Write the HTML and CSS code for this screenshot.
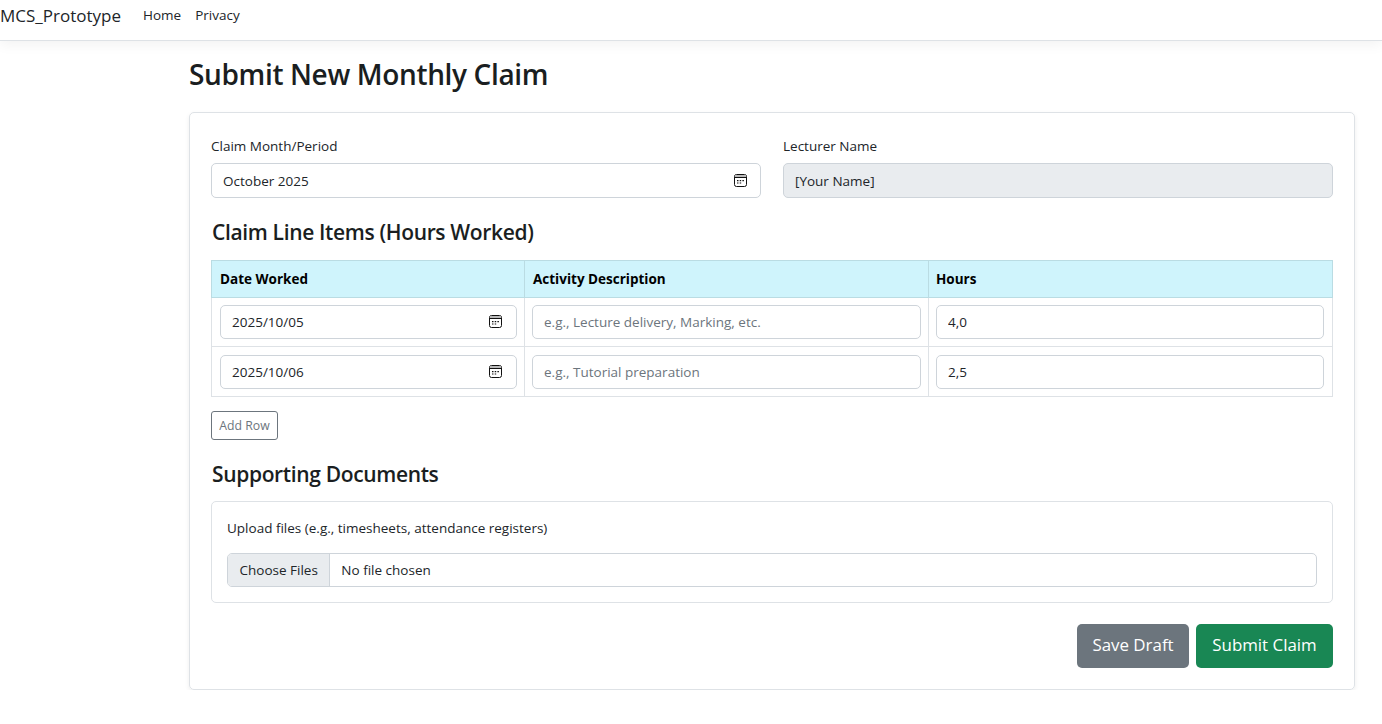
FILE: index.html
```html
<!DOCTYPE html>
<html lang="en">
<head>
<meta charset="utf-8">
<title>Submit New Monthly Claim - MCS_Prototype</title>
<link rel="stylesheet" href="styles.css">
</head>
<body>
<svg class="sprite" width="0" height="0" aria-hidden="true">
  <symbol id="cal" viewBox="0 0 13 13">
    <rect x=".5" y=".5" width="12" height="12" rx="2" fill="none" stroke="currentColor"/>
    <rect x="1" y="1" width="11" height="2" fill="#bbb"/>
    <rect x="1" y="3" width="11" height="1" fill="currentColor"/>
    <path d="M3 6h1.5v1.2H3zM5.7 6h1.5v1.2H5.7zM8.4 6h1.5v1.2H8.4zM3 8.4h1.5v1.2H3zM5.7 8.4h1.5v1.2H5.7z" fill="currentColor"/>
  </symbol>
</svg>
<header class="navbar">
  <a class="brand" href="#">MCS_Prototype</a>
  <nav class="nav-links">
    <a href="#">Home</a>
    <a href="#">Privacy</a>
  </nav>
</header>
<main class="container">
  <h1>Submit New Monthly Claim</h1>
  <form class="card">
    <div class="two-col">
      <div class="field">
        <label>Claim Month/Period</label>
        <div class="control tall"><input class="bare" type="text" value="October 2025"><svg class="cal"><use href="#cal"/></svg></div>
      </div>
      <div class="field">
        <label>Lecturer Name</label>
        <div class="control tall readonly"><input class="bare" type="text" value="[Your Name]" readonly></div>
      </div>
    </div>
    <h2>Claim Line Items (Hours Worked)</h2>
    <table class="items">
      <thead>
        <tr><th class="c-date">Date Worked</th><th class="c-desc">Activity Description</th><th class="c-hours">Hours</th></tr>
      </thead>
      <tbody>
        <tr>
          <td><div class="control"><input class="bare" type="text" value="2025/10/05"><svg class="cal"><use href="#cal"/></svg></div></td>
          <td><div class="control"><input class="bare" type="text" placeholder="e.g., Lecture delivery, Marking, etc."></div></td>
          <td><div class="control"><input class="bare" type="text" value="4,0"></div></td>
        </tr>
        <tr>
          <td><div class="control"><input class="bare" type="text" value="2025/10/06"><svg class="cal"><use href="#cal"/></svg></div></td>
          <td><div class="control"><input class="bare" type="text" placeholder="e.g., Tutorial preparation"></div></td>
          <td><div class="control"><input class="bare" type="text" value="2,5"></div></td>
        </tr>
      </tbody>
    </table>
    <button class="add-row" type="button">Add Row</button>
    <h2 class="docs-title">Supporting Documents</h2>
    <section class="docs">
      <label>Upload files (e.g., timesheets, attendance registers)</label>
      <div class="file-control">
        <span class="file-btn">Choose Files</span>
        <span class="file-name">No file chosen</span>
      </div>
    </section>
    <div class="actions">
      <button class="btn grey" type="button">Save Draft</button>
      <button class="btn green" type="button">Submit Claim</button>
    </div>
  </form>
</main>
</body>
</html>
```
FILE: styles.css
```css
* { box-sizing: border-box; }
html, body { margin: 0; padding: 0; }
body {
  font-family: "Open Sans", "Noto Sans", sans-serif;
  font-size: 13.5px;
  line-height: 21px;
  color: #212529;
  background: #fff;
}
.sprite { display: block; height: 0; }
a { color: inherit; text-decoration: none; }

.navbar {
  display: flex;
  align-items: flex-start;
  height: 41px;
  border-bottom: 1px solid #dee2e6;
  box-shadow: 0 4px 12px rgba(0, 0, 0, .05);
}
.brand { font-size: 17px; line-height: 32px; color: #212529; }
.nav-links { display: flex; gap: 14px; margin-left: 22px; padding-top: 5px; color: #212529; }

.container { width: 1166px; margin-left: 189px; }
h1 {
  margin: 16px 0 21px;
  font-size: 28px;
  line-height: 34px;
  font-weight: 600;
  letter-spacing: -.35px;
  color: #1a1e21;
}
h2 {
  margin: 0 0 15px 1px;
  font-size: 21px;
  line-height: 25px;
  font-weight: 600;
  letter-spacing: -.35px;
  color: #1a1e21;
}

.card {
  display: flex;
  flex-direction: column;
  height: 578px;
  padding: 23px 21px 21px;
  border: 1px solid #dee2e6;
  border-radius: 5px;
  box-shadow: 0 2px 5px rgba(0, 0, 0, .07);
}
.two-col { display: grid; grid-template-columns: 550px 550px; column-gap: 22px; margin-bottom: 22px; }
.field label { display: block; margin-bottom: 6px; line-height: 21px; }

.control {
  display: flex;
  align-items: center;
  height: 34px;
  padding: 0 14px 0 11px;
  background: #fff;
  border: 1px solid #ced4da;
  border-radius: 5px;
}
.control.tall { height: 35px; padding-right: 13px; }
.control.readonly { background: #e9ecef; }
.bare {
  flex: 1;
  min-width: 0;
  height: 100%;
  padding: 0;
  border: 0;
  outline: 0;
  background: transparent;
  font: inherit;
  color: #212529;
}
.bare::placeholder { color: #6c757d; opacity: 1; }
.cal { width: 13px; height: 13px; flex: none; color: #111; }

.items { width: 1122px; table-layout: fixed; border-collapse: collapse; }
.c-date { width: 313px; }
.c-desc { width: 404px; }
.items th, .items td { border: 1px solid #dee2e6; }
.items th {
  height: 37px;
  padding: 0 8px;
  text-align: left;
  font-weight: 700;
  color: #000;
  background: #cff4fc;
  border-color: #badce3;
}
.items .c-hours { padding-left: 7px; }
.items td { height: 50px; padding: 0 8px 0 7px; }
.items tbody tr:first-child td { height: 49px; padding-bottom: 1px; }
.items td:first-child { padding-left: 8px; padding-right: 7px; }
.items td:nth-child(2) { padding-right: 7px; }

.add-row {
  align-self: flex-start;
  width: 67px;
  height: 29px;
  margin: 14px 0 22px;
  padding: 0;
  font: inherit;
  font-size: 12.25px;
  color: #6c757d;
  background: #fff;
  border: 1px solid #6c757d;
  border-radius: 3px;
}
.docs-title { margin-bottom: 14px; }

.docs {
  height: 102px;
  padding: 16px 15px 0;
  border: 1px solid #dee2e6;
  border-radius: 5px;
}
.docs label { display: block; margin-bottom: 14px; }
.file-control {
  display: flex;
  align-items: center;
  height: 34px;
  border: 1px solid #ced4da;
  border-radius: 5px;
  overflow: hidden;
}
.file-btn {
  align-self: stretch;
  display: flex;
  align-items: center;
  padding: 0 11.5px;
  background: #e9ecef;
  border-right: 1px solid #ced4da;
}
.file-name { padding-left: 11px; }

.actions { display: flex; justify-content: flex-end; gap: 7px; margin-top: 21px; }
.btn {
  height: 44px;
  padding: 0 15px 3px;
  font: inherit;
  font-size: 16.9px;
  color: #fff;
  border: 0;
  border-radius: 5px;
}
.btn.grey { width: 112px; background: #6c757d; }
.btn.green { width: 137px; background: #198754; }
```
